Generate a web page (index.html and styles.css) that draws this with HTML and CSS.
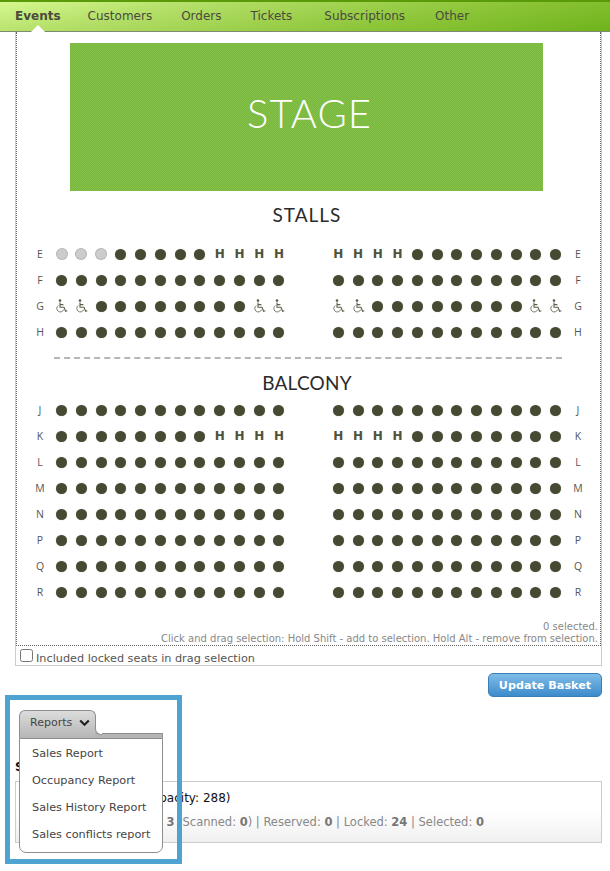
FILE: index.html
```html
<!DOCTYPE html>
<html lang="en">
<head>
<meta charset="utf-8">
<title>Seating plan</title>
<link rel="stylesheet" href="styles.css">
</head>
<body>
<svg class="defs" width="0" height="0"><defs><symbol id="wc" viewBox="0 0 13 14"><circle cx="5" cy="1.6" r="1.3" fill="#5d5f49"/><path d="M5 3.5V8.3H9L10.6 12.3L12.3 11.7M5 5.6H8.4" fill="none" stroke="#5d5f49" stroke-width="1.1"/><path d="M3.4 6.5A3.5 3.5 0 1 0 8.6 10.6" fill="none" stroke="#77796a" stroke-width="1"/></symbol></defs></svg>
<nav class="nav">
  <a class="nav-item active">Events</a>
  <a class="nav-item tight">Customers</a>
  <a class="nav-item tight">Orders</a>
  <a class="nav-item wide">Tickets</a>
  <a class="nav-item">Subscriptions</a>
  <a class="nav-item">Other</a>
  <span class="notch"></span>
</nav>
<main class="page">
  <section class="plan">
    <div class="map">
      <div class="stage">STAGE</div>
      <h2 class="area stalls">STALLS</h2>
      <div class="row"><span class="lbl">E</span><div class="blk"><i class="g"></i><i class="g"></i><i class="g"></i><i></i><i></i><i></i><i></i><i></i><b>H</b><b>H</b><b>H</b><b>H</b></div><div class="blk"><b>H</b><b>H</b><b>H</b><b>H</b><i></i><i></i><i></i><i></i><i></i><i></i><i></i><i></i></div><span class="lbl">E</span></div>
      <div class="row"><span class="lbl">F</span><div class="blk"><i></i><i></i><i></i><i></i><i></i><i></i><i></i><i></i><i></i><i></i><i></i><i></i></div><div class="blk"><i></i><i></i><i></i><i></i><i></i><i></i><i></i><i></i><i></i><i></i><i></i><i></i></div><span class="lbl">F</span></div>
      <div class="row"><span class="lbl">G</span><div class="blk"><u><svg><use href="#wc"/></svg></u><u><svg><use href="#wc"/></svg></u><i></i><i></i><i></i><i></i><i></i><i></i><i></i><i></i><u><svg><use href="#wc"/></svg></u><u><svg><use href="#wc"/></svg></u></div><div class="blk"><u><svg><use href="#wc"/></svg></u><u><svg><use href="#wc"/></svg></u><i></i><i></i><i></i><i></i><i></i><i></i><i></i><i></i><u><svg><use href="#wc"/></svg></u><u><svg><use href="#wc"/></svg></u></div><span class="lbl">G</span></div>
      <div class="row"><span class="lbl">H</span><div class="blk"><i></i><i></i><i></i><i></i><i></i><i></i><i></i><i></i><i></i><i></i><i></i><i></i></div><div class="blk"><i></i><i></i><i></i><i></i><i></i><i></i><i></i><i></i><i></i><i></i><i></i><i></i></div><span class="lbl">H</span></div>
      <hr class="divider">
      <h2 class="area balcony">BALCONY</h2>
      <div class="row"><span class="lbl">J</span><div class="blk"><i></i><i></i><i></i><i></i><i></i><i></i><i></i><i></i><i></i><i></i><i></i><i></i></div><div class="blk"><i></i><i></i><i></i><i></i><i></i><i></i><i></i><i></i><i></i><i></i><i></i><i></i></div><span class="lbl">J</span></div>
      <div class="row"><span class="lbl">K</span><div class="blk"><i></i><i></i><i></i><i></i><i></i><i></i><i></i><i></i><b>H</b><b>H</b><b>H</b><b>H</b></div><div class="blk"><b>H</b><b>H</b><b>H</b><b>H</b><i></i><i></i><i></i><i></i><i></i><i></i><i></i><i></i></div><span class="lbl">K</span></div>
      <div class="row"><span class="lbl">L</span><div class="blk"><i></i><i></i><i></i><i></i><i></i><i></i><i></i><i></i><i></i><i></i><i></i><i></i></div><div class="blk"><i></i><i></i><i></i><i></i><i></i><i></i><i></i><i></i><i></i><i></i><i></i><i></i></div><span class="lbl">L</span></div>
      <div class="row"><span class="lbl">M</span><div class="blk"><i></i><i></i><i></i><i></i><i></i><i></i><i></i><i></i><i></i><i></i><i></i><i></i></div><div class="blk"><i></i><i></i><i></i><i></i><i></i><i></i><i></i><i></i><i></i><i></i><i></i><i></i></div><span class="lbl">M</span></div>
      <div class="row"><span class="lbl">N</span><div class="blk"><i></i><i></i><i></i><i></i><i></i><i></i><i></i><i></i><i></i><i></i><i></i><i></i></div><div class="blk"><i></i><i></i><i></i><i></i><i></i><i></i><i></i><i></i><i></i><i></i><i></i><i></i></div><span class="lbl">N</span></div>
      <div class="row"><span class="lbl">P</span><div class="blk"><i></i><i></i><i></i><i></i><i></i><i></i><i></i><i></i><i></i><i></i><i></i><i></i></div><div class="blk"><i></i><i></i><i></i><i></i><i></i><i></i><i></i><i></i><i></i><i></i><i></i><i></i></div><span class="lbl">P</span></div>
      <div class="row"><span class="lbl">Q</span><div class="blk"><i></i><i></i><i></i><i></i><i></i><i></i><i></i><i></i><i></i><i></i><i></i><i></i></div><div class="blk"><i></i><i></i><i></i><i></i><i></i><i></i><i></i><i></i><i></i><i></i><i></i><i></i></div><span class="lbl">Q</span></div>
      <div class="row"><span class="lbl">R</span><div class="blk"><i></i><i></i><i></i><i></i><i></i><i></i><i></i><i></i><i></i><i></i><i></i><i></i></div><div class="blk"><i></i><i></i><i></i><i></i><i></i><i></i><i></i><i></i><i></i><i></i><i></i><i></i></div><span class="lbl">R</span></div>
      <div class="notes">
        <p>0 selected.</p>
        <p>Click and drag selection: Hold Shift - add to selection. Hold Alt - remove from selection.</p>
      </div>
    </div>
    <label class="locked"><input type="checkbox"><span class="locked-text">Included locked seats in drag selection</span></label>
  </section>
  <div class="actions"><button class="update">Update Basket</button></div>
  <h3 class="summary-title">Summary</h3>
  <section class="summary">
    <p class="cap">Total (Capacity: 288)</p>
    <p class="stats">Sold: <b>3</b> (Scanned: <b>0</b>) | Reserved: <b>0</b> | Locked: <b>24</b> | Selected: <b>0</b></p>
  </section>
</main>
<div class="callout">
  <div class="reports">
    <div class="tab">Reports<svg class="chev" width="11" height="8" viewBox="0 0 11 8"><path d="M1.2 1.5L5.5 5.8L9.8 1.5" fill="none" stroke="#222" stroke-width="2.2"/></svg></div>
    <span class="tab-join"></span>
    <ul class="menu">
      <li>Sales Report</li>
      <li>Occupancy Report</li>
      <li>Sales History Report</li>
      <li>Sales conflicts report</li>
    </ul>
  </div>
</div>
</body>
</html>
```
FILE: styles.css
```css
* { box-sizing: border-box; }
html, body { margin: 0; padding: 0; }
body { width: 610px; height: 871px; overflow: hidden; position: relative; background: #fff; font-family: "DejaVu Sans", Verdana, sans-serif; font-size: 11px; color: #555; }
.defs { position: absolute; }

.nav { position: relative; height: 32px; display: flex; align-items: center; padding: 0 0 2px 15px; border-top: 2px solid #5a9a08; border-bottom: 1px solid #7f8a70; background: linear-gradient(170deg, #d6f88f 0%, #b5e06a 25%, #8ec63a 65%, #6fb31c 100%); }
.nav-item { font-size: 12px; color: #4a4a3e; margin-right: 30px; white-space: nowrap; }
.nav-item.active { font-weight: bold; margin-right: 27px; }
.nav-item.tight { margin-right: 29px; }
.nav-item.wide { margin-right: 32px; }
.notch { position: absolute; left: 31px; bottom: -1px; width: 14px; height: 7px; background: #fff; clip-path: polygon(50% 0, 100% 100%, 0 100%); }

.page { padding: 0 8px 0 15px; }
.plan { width: 587px; border: 1px solid #ccc; border-top: 0; }
.map { height: 614px; position: relative; border-left: 1px dotted #666; border-right: 1px dotted #666; border-bottom: 1px dotted #666; display: flow-root; }
.stage { width: 473px; height: 148px; margin: 11px 0 0 53px; display: flex; align-items: center; justify-content: center; padding: 0 0 8px 6px; font-family: Lato, "Open Sans", sans-serif; font-size: 40px; font-weight: 300; letter-spacing: 1px; color: #fff; background-color: #7bbc40; background-image: repeating-conic-gradient(#82c049 0 25%, #7ab83e 0 50%); background-size: 2px 2px; }
.area { margin: 0; text-align: center; font-family: Lato, "Open Sans", sans-serif; font-size: 19px; font-weight: 400; line-height: 24px; color: #2b2b2b; width: 580px; }
.stalls { margin-top: 12px; margin-bottom: 14px; letter-spacing: 1px; }
.balcony { margin-top: 12px; margin-bottom: 2px; letter-spacing: .2px; }

.row { height: 26px; display: flex; align-items: center; }
.lbl { width: 16px; font-family: "Open Sans", sans-serif; font-size: 10.5px; text-align: center; color: #555; }
.row .lbl:first-child { margin: 0 3.8px 0 15px; }
.row .lbl:last-child { margin-left: 4.6px; }
.blk { width: 237px; display: grid; grid-template-columns: repeat(12, 19.75px); align-items: center; justify-items: center; }
.blk + .blk { margin-left: 39.6px; }
.blk i { display: block; width: 11px; height: 11px; border-radius: 50%; background: #474a32; box-shadow: 0 0 1px #a5a79a; }
.blk i.g { background: #ccc; box-shadow: 0 0 0 1px #b5b5b5; width: 10px; height: 10px; }
.blk b { font-size: 12px; line-height: 13px; font-weight: bold; color: #50533c; }
.blk u { display: block; width: 13px; height: 14px; text-decoration: none; }
.blk u svg { display: block; width: 13px; height: 14px; }

.divider { margin: 12px 0 0 37px; width: 508px; height: 0; border: 0; border-top: 2px dashed #b9b5bb; }

.notes { position: absolute; right: 2px; bottom: 0; text-align: right; font-size: 10px; line-height: 12px; color: #888; }
.notes p { margin: 0; }

.locked { height: 19px; display: flex; align-items: center; font-size: 11.25px; color: #555; white-space: nowrap; }
.locked input { width: 13px; height: 13px; margin: 0 3px 0 4px; }
.locked-text { padding-top: 5px; }

.actions { display: flex; justify-content: flex-end; margin-top: 7px; }
.update { width: 114px; height: 24px; padding: 0; border: 1px solid #3b7fb8; border-radius: 5px; font-family: inherit; font-size: 11.2px; font-weight: bold; color: #fff; background: linear-gradient(#7fbde8, #3d8bcb); }

.summary-title { margin: 63px 0 0; font-size: 12px; line-height: 14px; color: #111; }
.summary { width: 587px; height: 62px; margin-top: 7px; padding: 9px 0 0; border: 1px solid #ccc; background: linear-gradient(#fff 50%, #f0f0f0); white-space: nowrap; }
.cap { margin: 0 0 0 91px; font-size: 12px; line-height: 15px; color: #111; }
.stats { margin: 10px 0 0 118px; font-size: 11.5px; line-height: 13px; color: #888; }
.stats b { color: #777; }

.callout { position: absolute; left: 5px; top: 695px; width: 177px; height: 169px; border: 5px solid #4fa3d1; }
.reports { position: absolute; left: 9px; top: 10px; width: 144px; }
.tab { width: 77px; height: 28px; display: flex; align-items: center; gap: 7px; padding: 0 0 4px 10px; border: 1px solid #8e8e8e; border-bottom: 0; border-radius: 6px 6px 0 0; font-size: 11px; color: #444; background: linear-gradient(#dcdcdc, #b5b5b5); }
.tab-join { position: absolute; left: 76px; top: 23px; width: 68px; height: 5px; border-top: 1px solid #8e8e8e; border-right: 1px solid #8e8e8e; background: #b5b5b5; }
.tab-join::after { content: ""; position: absolute; left: 0; top: -6px; width: 6px; height: 6px; background: #b5b5b5; }
.tab-join::before { content: ""; position: absolute; z-index: 1; left: 0; top: -6px; width: 6px; height: 6px; background: #fff; border-left: 1px solid #8e8e8e; border-bottom: 1px solid #8e8e8e; border-bottom-left-radius: 6px; }
.menu { list-style: none; margin: 0; padding: 1px 0 0; width: 144px; height: 115px; border: 1px solid #8e8e8e; border-radius: 0 0 7px 7px; background: #fff; }
.menu li { height: 27px; line-height: 27px; padding-left: 12px; font-size: 11.25px; color: #444; white-space: nowrap; }
```
